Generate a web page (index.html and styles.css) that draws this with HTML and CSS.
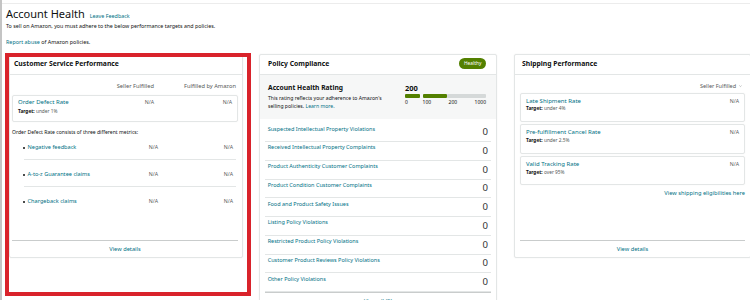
FILE: index.html
```html
<!DOCTYPE html>
<html lang="en">
<head>
<meta charset="utf-8">
<title>Account Health</title>
<link rel="stylesheet" href="styles.css">
</head>
<body>
<div class="page">
  <div class="topline"></div>
  <header class="intro">
    <h1 class="title">Account Health <a class="feedback" href="#">Leave Feedback</a></h1>
    <p class="lead">To sell on Amazon, you must adhere to the below performance targets and policies.</p>
    <p class="report"><a href="#">Report abuse</a> of Amazon policies.</p>
  </header>

  <main class="cards">
    <section class="card card-short card-csp">
      <div class="card-head">Customer Service Performance</div>
      <div class="csp-body">
        <div class="colhead"><span></span><span>Seller Fulfilled</span><span>Fulfilled by Amazon</span></div>
        <div class="metric metric-compact">
          <a class="metric-name" href="#">Order Defect Rate</a>
          <span class="na na-mid">N/A</span>
          <span class="na">N/A</span>
          <div class="target"><b>Target:</b> under 1%</div>
        </div>
        <p class="desc">Order Defect Rate consists of three different metrics:</p>
        <ul class="submetrics">
          <li><a href="#">Negative feedback</a><span class="na">N/A</span><span class="na">N/A</span></li>
          <li><a href="#">A-to-z Guarantee claims</a><span class="na">N/A</span><span class="na">N/A</span></li>
          <li><a href="#">Chargeback claims</a><span class="na">N/A</span><span class="na">N/A</span></li>
        </ul>
      </div>
      <a class="card-foot" href="#">View details</a>
    </section>

    <section class="card card-policy">
      <div class="card-head">Policy Compliance <span class="badge">Healthy</span></div>
      <div class="rating">
        <div class="rating-info">
          <div class="rating-title">Account Health Rating</div>
          <p class="rating-desc">This rating reflects your adherence to Amazon's selling policies. <a href="#">Learn more.</a></p>
        </div>
        <div class="rating-scale">
          <div class="score">200</div>
          <div class="bar"><span class="seg seg-a"></span><span class="seg seg-b"></span><span class="seg seg-c"></span></div>
          <div class="bar-labels"><span class="lab-a">0</span><span class="lab-b">100</span><span class="lab-c"><span>200</span><span>1000</span></span></div>
        </div>
      </div>
      <ul class="policy-list">
        <li><a href="#">Suspected Intellectual Property Violations</a><span class="count">0</span></li>
        <li><a href="#">Received Intellectual Property Complaints</a><span class="count">0</span></li>
        <li><a href="#">Product Authenticity Customer Complaints</a><span class="count">0</span></li>
        <li><a href="#">Product Condition Customer Complaints</a><span class="count">0</span></li>
        <li><a href="#">Food and Product Safety Issues</a><span class="count">0</span></li>
        <li><a href="#">Listing Policy Violations</a><span class="count">0</span></li>
        <li><a href="#">Restricted Product Policy Violations</a><span class="count">0</span></li>
        <li><a href="#">Customer Product Reviews Policy Violations</a><span class="count">0</span></li>
        <li><a href="#">Other Policy Violations</a><span class="count">0</span></li>
      </ul>
      <a class="card-foot policy-foot" href="#">View all (0)</a>
    </section>

    <section class="card card-short card-ship">
      <div class="card-head">Shipping Performance</div>
      <div class="ship-body">
        <div class="ship-filter">Seller Fulfilled <svg class="chev" viewBox="0 0 4 3" width="3" height="2.2"><polyline points="0.4,0.6 2,2.2 3.6,0.6" fill="none" stroke="#8a8f8f" stroke-width="0.7"/></svg></div>
        <div class="metric">
          <a class="metric-name" href="#">Late Shipment Rate</a>
          <span class="na">N/A</span>
          <div class="target"><b>Target:</b> under 4%</div>
        </div>
        <div class="metric">
          <a class="metric-name" href="#">Pre-fulfillment Cancel Rate</a>
          <span class="na">N/A</span>
          <div class="target"><b>Target:</b> under 2.5%</div>
        </div>
        <div class="metric">
          <a class="metric-name" href="#">Valid Tracking Rate</a>
          <span class="na">N/A</span>
          <div class="target"><b>Target:</b> over 95%</div>
        </div>
        <a class="ship-link" href="#">View shipping eligibilities here</a>
      </div>
      <a class="card-foot" href="#">View details</a>
    </section>

    <div class="highlight"></div>
  </main>
</div>
</body>
</html>
```

FILE: styles.css
```css
html, body {
  margin: 0;
  padding: 0;
  background: #fff;
}
body {
  width: 750px;
  height: 300px;
  overflow: hidden;
  font-family: "Noto Sans", "Open Sans", sans-serif;
  color: #0f1111;
}
a {
  color: #007185;
  text-decoration: none;
}
p, h1, ul {
  margin: 0;
  padding: 0;
}
ul {
  list-style: none;
}

.page {
  border-left: 2px solid #c4c4c4;
  padding-left: 4px;
  height: 300px;
  box-sizing: border-box;
}
.topline {
  height: 3px;
  border-bottom: 1px solid #ececec;
  margin-left: -4px;
}

/* intro */
.title {
  margin-top: 3px;
  font-size: 11px;
  line-height: 14px;
  font-weight: 400;
}
.feedback {
  font-size: 5.4px;
  margin-left: 2px;
}
.lead {
  font-size: 5.35px;
  line-height: 7px;
}
.report {
  margin-top: 9px;
  font-size: 5.4px;
  line-height: 7px;
}

/* cards */
.cards {
  position: relative;
  margin-top: 8px;
  margin-left: 3px;
  display: grid;
  grid-template-columns: 234px 238px 238px;
  column-gap: 16px;
  align-items: start;
  width: 760px;
}
.card {
  background: #fff;
  border: 1px solid #e3e6e6;
  border-radius: 2px;
  box-shadow: 0 0 2px rgba(0, 0, 0, 0.06);
  box-sizing: border-box;
  display: flex;
  flex-direction: column;
}
.card-short {
  height: 204px;
}
.card-ship {
  margin-left: 1px;
}
.card-head {
  height: 20px;
  box-sizing: border-box;
  padding: 0 10px 2px 4px;
  display: flex;
  align-items: center;
  justify-content: space-between;
  border-bottom: 1px solid #e3e6e6;
  font-size: 6.8px;
  font-weight: 700;
}
.card-policy .card-head {
  padding-left: 8px;
}
.card-ship .card-head {
  padding-left: 7px;
}
.badge {
  background: #538000;
  color: #fff;
  font-size: 4.8px;
  font-weight: 400;
  height: 10.3px;
  line-height: 10.3px;
  padding: 0 4.6px;
  border-radius: 6px;
}

.card-foot {
  margin: auto 4px 0 2px;
  border-top: 1px solid #c9cccc;
  height: 16px;
  line-height: 16px;
  text-align: center;
  font-size: 5.7px;
  flex-shrink: 0;
}
.card-ship .card-foot {
  margin: auto 5px 0 5px;
}

/* customer service */
.csp-body {
  padding: 0 4px 0 2px;
}
.colhead {
  margin-top: 7px;
  padding-right: 2px;
  display: grid;
  grid-template-columns: 1fr 80px 82px;
  line-height: 8px;
  font-size: 5.7px;
  color: #565959;
  text-align: right;
}
.metric {
  margin-top: 2px;
  height: 29.6px;
  box-sizing: border-box;
  border: 1px solid #e3e6e6;
  border-radius: 2px;
  box-shadow: 0 0 1.5px rgba(0, 0, 0, 0.06);
  padding: 3px 5px 0 5px;
  display: grid;
  grid-template-columns: 1fr 60px;
  align-content: start;
}
.metric-compact {
  margin-top: 4.5px;
  height: 27.5px;
  padding-top: 2px;
  grid-template-columns: 1fr 60px 78px;
}
.metric-name {
  font-size: 6px;
  line-height: 8px;
}
.na {
  font-size: 5.2px;
  line-height: 8px;
  color: #565959;
  text-align: right;
}
.target {
  grid-column: 1 / -1;
  margin-top: 0.8px;
  font-size: 4.8px;
  line-height: 6px;
  color: #565959;
}
.metric-compact .target {
  margin-top: 2px;
}
.target b {
  color: #0f1111;
  font-weight: 700;
}
.desc {
  margin-top: 7px;
  font-size: 5.1px;
  line-height: 7px;
}
.submetrics {
  margin: 0 2px 0 12px;
}
.submetrics li {
  display: grid;
  grid-template-columns: 1fr 60px 75px;
  padding: 10px 3px 8px 3.5px;
  line-height: 8px;
  border-bottom: 1px solid #e3e6e6;
}
.submetrics li:first-child {
  padding-top: 7px;
}
.submetrics li:last-child {
  border-bottom: none;
}
.submetrics a {
  font-size: 5.6px;
}
.submetrics a::before {
  content: "";
  display: inline-block;
  width: 2px;
  height: 2px;
  border-radius: 50%;
  background: #0f1111;
  margin-left: -4.5px;
  margin-right: 2.5px;
  vertical-align: 0.5px;
}

/* policy compliance */
.rating {
  background: #f6f7f7;
  height: 44px;
  box-sizing: border-box;
  padding: 9.3px 10px 0 8px;
  display: flex;
  justify-content: space-between;
}
.rating-info {
  width: 128px;
}
.rating-title {
  font-size: 6.7px;
  font-weight: 700;
  line-height: 8px;
}
.rating-desc {
  margin-top: 2.5px;
  font-size: 5.1px;
  line-height: 7.8px;
}
.rating-scale {
  width: 81px;
}
.score {
  font-size: 7.5px;
  font-weight: 700;
  line-height: 8px;
}
.bar {
  margin-top: 2.2px;
  height: 4px;
  display: flex;
}
.seg {
  height: 4px;
  border-radius: 1px;
}
.seg-a {
  width: 15px;
  margin-right: 2.6px;
  background: #538000;
}
.seg-b {
  width: 24px;
  margin-right: 0.6px;
  background: #538000;
}
.seg-c {
  flex: 1;
  background: #d5d9d9;
}
.bar-labels {
  margin-top: 0.8px;
  display: flex;
  font-size: 5px;
  line-height: 6px;
}
.lab-a {
  width: 17.6px;
}
.lab-b {
  width: 26px;
}
.lab-c {
  flex: 1;
  display: flex;
  justify-content: space-between;
}

.policy-list {
  margin: 4.25px 5px 0 5px;
}
.policy-list li {
  height: 18.75px;
  box-sizing: border-box;
  border-bottom: 1px solid #e3e6e6;
  padding: 0 3px 0 2.7px;
  display: flex;
  justify-content: space-between;
  align-items: center;
}
.policy-list a {
  align-self: flex-start;
  margin-top: 2.3px;
  font-size: 5.5px;
  line-height: 7px;
}
.count {
  font-size: 9.6px;
  line-height: 10px;
  color: #333;
}
.policy-foot {
  margin: 0 5px;
}

/* shipping */
.ship-body {
  padding: 0 5px;
  display: flex;
  flex-direction: column;
}
.ship-filter {
  margin-top: 7px;
  padding-right: 3px;
  text-align: right;
  font-size: 5.5px;
  line-height: 8px;
  color: #565959;
}
.chev {
  margin-left: 1.5px;
  vertical-align: 0.5px;
}
.ship-filter + .metric {
  margin-top: 2.7px;
}
.ship-link {
  margin-top: 3.5px;
  text-align: right;
  font-size: 5.7px;
  line-height: 8px;
}

/* review annotation drawn over the first card */
.highlight {
  position: absolute;
  left: -4px;
  top: -1px;
  width: 246px;
  height: 243px;
  box-sizing: border-box;
  border: 4px solid #d9232b;
  pointer-events: none;
}
```
